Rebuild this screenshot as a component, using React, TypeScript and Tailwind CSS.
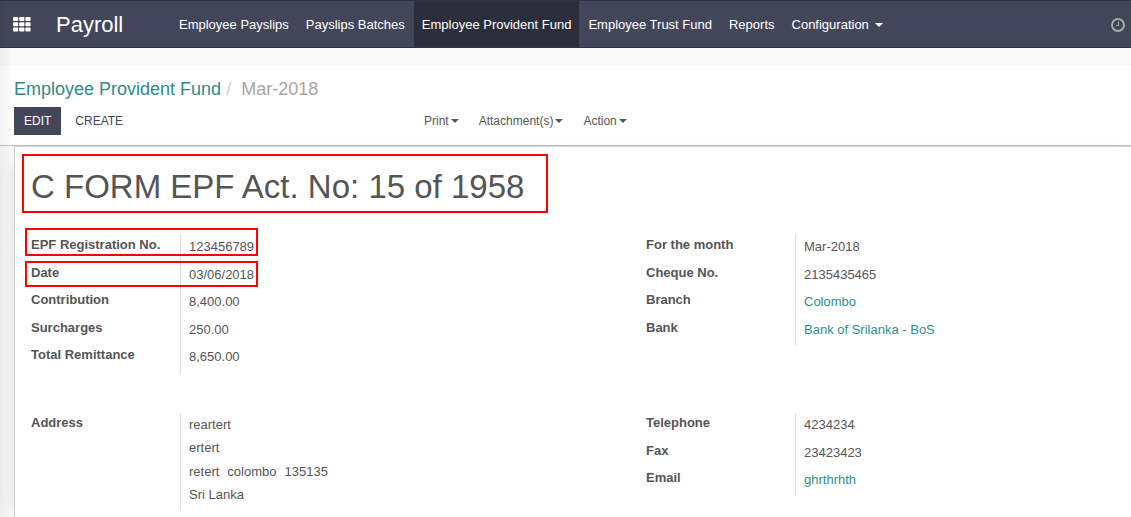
import type { ReactNode } from 'react';

const navItems = [
  { label: 'Employee Payslips' },
  { label: 'Payslips Batches' },
  { label: 'Employee Provident Fund', active: true },
  { label: 'Employee Trust Fund' },
  { label: 'Reports' },
];

type Field = { label: string; value: ReactNode; link?: boolean; marker?: string };

const payment: Field[] = [
  { label: 'EPF Registration No.', value: '123456789', marker: '-top-[7px] h-7' },
  { label: 'Date', value: '03/06/2018', marker: '-top-[2px] h-[26px]' },
  { label: 'Contribution', value: '8,400.00' },
  { label: 'Surcharges', value: '250.00' },
  { label: 'Total Remittance', value: '8,650.00' },
];

const bank: Field[] = [
  { label: 'For the month', value: 'Mar-2018' },
  { label: 'Cheque No.', value: '2135435465' },
  { label: 'Branch', value: 'Colombo', link: true },
  { label: 'Bank', value: 'Bank of Srilanka - BoS', link: true },
];

const contact: Field[] = [
  { label: 'Telephone', value: '4234234' },
  { label: 'Fax', value: '23423423' },
  { label: 'Email', value: 'ghrthrhth', link: true },
];

function Caret() {
  return (
    <span className="inline-block border-x-4 border-t-4 border-x-transparent border-t-current" />
  );
}

function AppsIcon() {
  return (
    <svg width="18" height="15" viewBox="0 0 18 15" fill="currentColor" aria-hidden="true">
      {[0, 5.2, 10.4].map((y) =>
        [0, 6.2, 12.4].map((x) => (
          <rect key={`${x}-${y}`} x={x} y={y} width="5.2" height="4.1" rx="0.8" />
        )),
      )}
    </svg>
  );
}

function ClockIcon() {
  return (
    <svg width="14" height="14" viewBox="0 0 14 14" fill="none" stroke="currentColor" aria-hidden="true">
      <circle cx="7" cy="7" r="6" strokeWidth="1.9" />
      <path d="M7.5 3.5v4H5" strokeWidth="1.1" />
    </svg>
  );
}

function FieldRow({ field }: { field: Field }) {
  return (
    <div className="relative flex">
      <dt className="w-[149px] shrink-0 pt-px font-bold">{field.label}</dt>
      <dd className="border-l border-[#dddddd] pt-[3px] pl-2">
        {field.link ? (
          <a href="#" className="text-[#2f8f8d]">
            {field.value}
          </a>
        ) : (
          field.value
        )}
      </dd>
      {field.marker && (
        <span
          className={`pointer-events-none absolute -left-[6px] w-[233px] border-2 border-[#ff0000] ${field.marker}`}
        />
      )}
    </div>
  );
}

function FieldGroup({ fields, className }: { fields: Field[]; className: string }) {
  return (
    <dl className={`grid self-start ${className}`}>
      {fields.map((field) => (
        <FieldRow key={field.label} field={field} />
      ))}
    </dl>
  );
}

export default function App() {
  return (
    <div className="relative flex min-h-screen flex-col overflow-hidden bg-[#f9f9f9] font-['Liberation_Sans',Arial,sans-serif] text-[13px] leading-[18px] text-[#555555]">
      <header className="flex h-12 items-stretch border-y border-[#33313f] bg-[#434659] text-white">
        <button type="button" aria-label="Applications" className="flex items-center pr-[25px] pl-[13px]">
          <AppsIcon />
        </button>
        <a href="#" className="flex w-[115px] items-center pt-px text-[22px]">
          Payroll
        </a>
        <nav className="flex items-stretch gap-px">
          {navItems.map((item) => (
            <a
              key={item.label}
              href="#"
              className={`flex items-center px-2 pt-[2px] whitespace-nowrap ${item.active ? 'bg-[#2c2f3b]' : ''}`}
            >
              {item.label}
            </a>
          ))}
          <button type="button" className="flex items-center gap-[6px] px-2 pt-[2px]">
            Configuration
            <Caret />
          </button>
        </nav>
        <button type="button" aria-label="Activities" className="ml-auto flex items-center pt-[2px] pr-[6px] text-[#a9a9ae]">
          <ClockIcon />
        </button>
      </header>

      <section className="mt-[18px] border-b border-[#c4c4c4] bg-white pt-3 pb-[10px] pl-[14px]">
        <nav aria-label="Breadcrumb" className="flex text-[18px] leading-[22px]">
          <a href="#" className="text-[#2f8a88]">
            Employee Provident Fund
          </a>
          <span className="px-[5px] text-[#cccccc]">/</span>
          <span className="pl-[5px] text-[#aaa5a1]">Mar-2018</span>
        </nav>
        <div className="mt-[7px] flex text-[12px]">
          <div className="flex w-[400px]">
            <button type="button" className="h-7 bg-[#434659] px-[10px] text-white">
              EDIT
            </button>
            <button type="button" className="h-7 px-[14px] text-[#434659]">
              CREATE
            </button>
          </div>
          <div className="flex">
            {['Print', 'Attachment(s)', 'Action'].map((label) => (
              <button key={label} type="button" className="flex items-center gap-[2px] px-[10px]">
                {label}
                <Caret />
              </button>
            ))}
          </div>
        </div>
      </section>

      <main className="flex grow flex-col pl-[14px]">
        <article className="grow border-t border-l border-[#d0d0d4] bg-white pt-[7px] pl-4 shadow-[0_5px_20px_-15px_#000000]">
          <h1 className="-ml-[9px] w-fit border-2 border-[#ff0000] pt-[13px] pr-[22px] pb-[6px] pl-[7px] text-[33px] leading-[36px]">
            C FORM EPF Act. No: 15 of 1958
          </h1>
          <div className="mt-[22px] grid grid-cols-[615fr_485fr]">
            <FieldGroup fields={payment} className="min-h-[138px]" />
            <FieldGroup fields={bank} className="min-h-[110px]" />
          </div>
          <div className="mt-10 grid grid-cols-[615fr_485fr] pb-[6px]">
            <dl className="flex self-start">
              <dt className="w-[149px] shrink-0 pt-px font-bold">Address</dt>
              <dd className="grid min-h-[98px] border-l border-[#dddddd] pt-[3px] pb-[2px] pl-2">
                <span>reartert</span>
                <span>ertert</span>
                <span className="flex gap-2">
                  <span>retert</span>
                  <span>colombo</span>
                  <span>135135</span>
                </span>
                <span>Sri Lanka</span>
              </dd>
            </dl>
            <FieldGroup fields={contact} className="min-h-[83px]" />
          </div>
        </article>
      </main>

      <div className="pointer-events-none absolute inset-y-0 left-0 w-3 bg-linear-to-r from-black/5 to-transparent" />
    </div>
  );
}
